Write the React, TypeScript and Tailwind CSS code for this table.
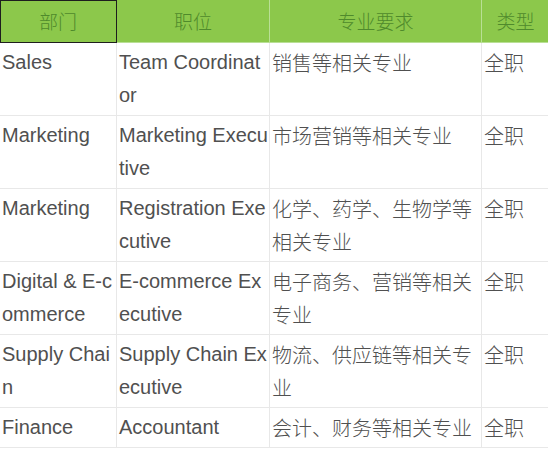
import React from "react";

type Row = { dept: string[]; title: string[]; req: string[]; type: string };

const rows: Row[] = [
  { dept: ["Sales"], title: ["Team Coordinat", "or"], req: ["销售等相关专业"], type: "全职" },
  { dept: ["Marketing"], title: ["Marketing Execu", "tive"], req: ["市场营销等相关专业"], type: "全职" },
  { dept: ["Marketing"], title: ["Registration Exe", "cutive"], req: ["化学、药学、生物学等", "相关专业"], type: "全职" },
  { dept: ["Digital & E-c", "ommerce"], title: ["E-commerce Ex", "ecutive"], req: ["电子商务、营销等相关", "专业"], type: "全职" },
  { dept: ["Supply Chai", "n"], title: ["Supply Chain Ex", "ecutive"], req: ["物流、供应链等相关专", "业"], type: "全职" },
  { dept: ["Finance"], title: ["Accountant"], req: ["会计、财务等相关专业"], type: "全职" },
];

const cell =
  "border border-[#e8e8e8] px-[2px] py-[3px] align-top whitespace-nowrap overflow-hidden text-[20px] leading-[33px] text-[#505050]";
const cjk = " font-light text-[19.5px] text-[#555] [font-family:'Noto_Sans_CJK_SC',sans-serif]";
const head =
  "border border-[#b9df95] h-[43px] p-0 text-center align-middle font-light text-[19px] text-[#4f8a2c] [font-family:'Noto_Sans_CJK_SC',serif]";

const Lines = ({ lines }: { lines: string[] }) => (
  <>
    {lines.map((l, i) => (
      <div key={i}>{l}</div>
    ))}
  </>
);

export default function App() {
  return (
    <div className="w-[548px] h-[450px] overflow-hidden bg-white [font-family:'Liberation_Sans','Noto_Sans_CJK_SC',sans-serif]">
      <table className="table-fixed border-collapse w-[550px] -mt-px -ml-px">
        <colgroup>
          <col className="w-[117px]" />
          <col className="w-[153px]" />
          <col className="w-[212px]" />
          <col className="w-[68px]" />
        </colgroup>
        <thead>
          <tr className="bg-[#8cc84b]">
            <th className={head + " outline outline-1 outline-[#1e1e1e] -outline-offset-1"}>部门</th>
            <th className={head}>职位</th>
            <th className={head}>专业要求</th>
            <th className={head}>类型</th>
          </tr>
        </thead>
        <tbody>
          {rows.map((r, i) => (
            <tr key={i}>
              <td className={cell}>
                <Lines lines={r.dept} />
              </td>
              <td className={cell}>
                <Lines lines={r.title} />
              </td>
              <td className={cell + cjk}>
                <Lines lines={r.req} />
              </td>
              <td className={cell + cjk}>{r.type}</td>
            </tr>
          ))}
        </tbody>
      </table>
    </div>
  );
}
